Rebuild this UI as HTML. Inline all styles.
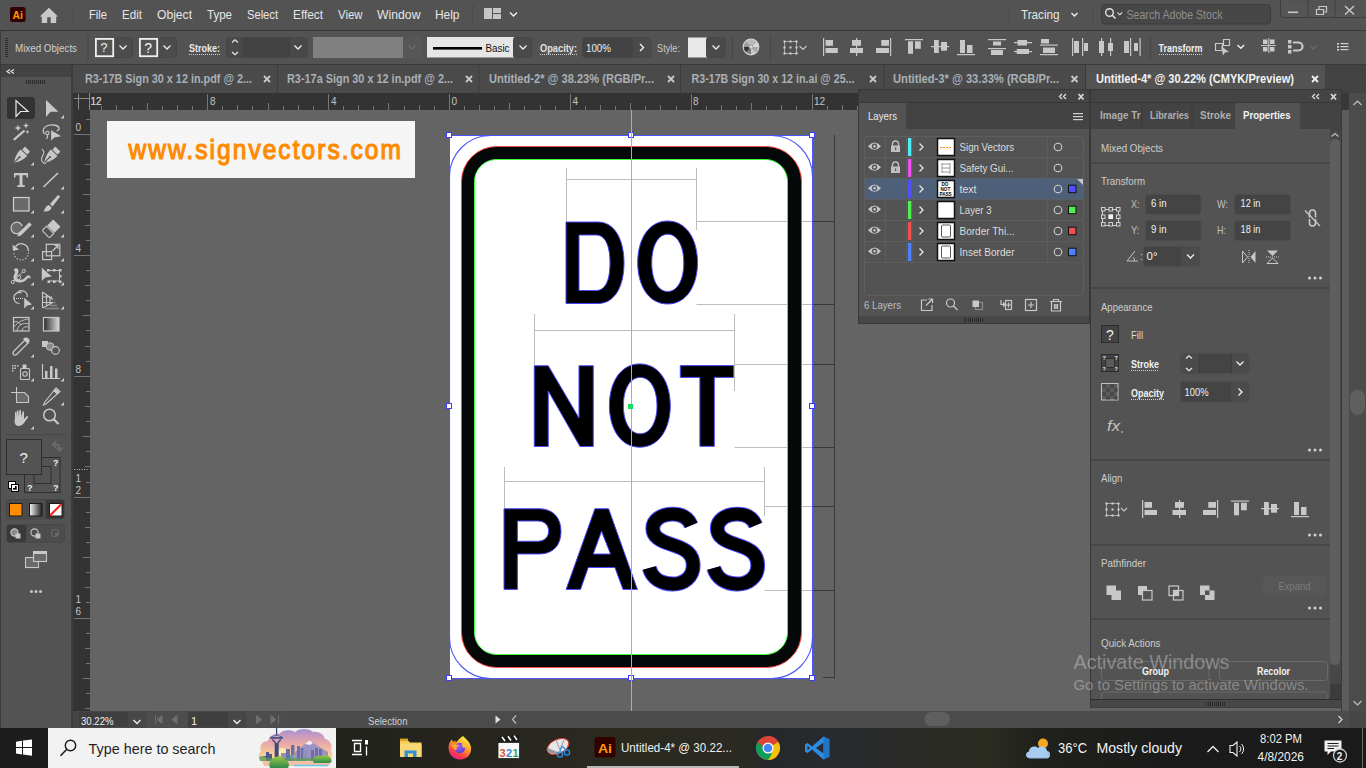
<!DOCTYPE html>
<html><head><meta charset="utf-8">
<style>
*{margin:0;padding:0;box-sizing:border-box}
html,body{width:1366px;height:768px;overflow:hidden;background:#535353;font-family:"Liberation Sans",sans-serif}
.a{position:absolute}
svg text{font-family:"Liberation Sans",sans-serif}
</style></head><body>
<div class="a" style="left:0;top:0;width:1366px;height:30px;background:#535353"></div>
<div class="a" style="left:0;top:30px;width:1366px;height:1px;background:#383838"></div>
<div class="a" style="left:0;top:31px;width:1366px;height:33px;background:#535353"></div>
<div class="a" style="left:0;top:64px;width:1366px;height:1px;background:#3a3a3a"></div>
<div class="a" style="left:0;top:65px;width:1366px;height:28px;background:#434343"></div>
<div class="a" style="left:0;top:65px;width:72px;height:663px;background:#3c3c3c"></div>
<div class="a" style="left:73px;top:93px;width:1276px;height:17px;background:#333"></div>
<div class="a" style="left:73px;top:93px;width:17px;height:618px;background:#333"></div>
<div class="a" style="left:90px;top:110px;width:1259px;height:601px;background:#646464"></div>
<div class="a" style="left:73px;top:711px;width:1293px;height:17px;background:#4a4a4a"></div>
<div class="a" style="left:0;top:728px;width:1366px;height:40px;background:#1d1d1a"></div>
<svg class="a" style="left:0;top:0" width="1366" height="768" viewBox="0 0 1366 768">
<defs><clipPath id="cv"><rect x="90" y="110" width="1259" height="601"/></clipPath></defs>
<g clip-path="url(#cv)">
<rect x="107" y="121" width="308" height="57" fill="#f5f5f5"/>
<text x="0" y="159" transform="translate(128.5 0) scale(0.875 1)" fill="#ff8a00" stroke="#ff8a00" stroke-width="1.2" font-family="Liberation Sans" font-size="28" letter-spacing="2.35">www.signvectors.com</text>
<rect x="449" y="135" width="364" height="544" fill="#fff"/>
<g stroke="#bdbdbd" stroke-width="1" fill="none">
<path d="M566.5,168V222M566.5,179.5H696.5M696.5,168V230M696.5,221.5H813M696.5,304.5H813"/>
<path d="M534.5,314V365M534.5,330.5H734.5M734.5,314V391M734.5,364.5H813M734.5,447.5H813"/>
<path d="M504.5,467V508M504.5,481.5H764.5M764.5,467V516M764.5,506.5H813M764.5,590.5H813"/>
</g>
<g stroke="#3a3a3a" stroke-width="1" fill="none">
<path d="M813,221.5H834.5M813,304.5H834.5M813,364.5H834.5M813,447.5H834.5M813,506.5H834.5M813,590.5H834.5M834.5,135V678.5M823,677.5H835"/>
</g>
<path fill-rule="evenodd" fill="#050808" d="M496.5,146.5H766.5A35,35 0 0 1 801.5,181.5V632.5A35,35 0 0 1 766.5,667.5H496.5A35,35 0 0 1 461.5,632.5V181.5A35,35 0 0 1 496.5,146.5Z M496.5,159.5A22,22 0 0 0 474.5,181.5V632.5A22,22 0 0 0 496.5,654.5H765.5A22,22 0 0 0 787.5,632.5V181.5A22,22 0 0 0 765.5,159.5Z"/>
<path fill="none" stroke="#ff4a4a" stroke-width="1" d="M496.5,146.5H766.5A35,35 0 0 1 801.5,181.5V632.5A35,35 0 0 1 766.5,667.5H496.5A35,35 0 0 1 461.5,632.5V181.5A35,35 0 0 1 496.5,146.5Z"/>
<path fill="none" stroke="#3cff3c" stroke-width="1" d="M496.5,159.5A22,22 0 0 0 474.5,181.5V632.5A22,22 0 0 0 496.5,654.5H765.5A22,22 0 0 0 787.5,632.5V181.5A22,22 0 0 0 765.5,159.5Z"/>
<path fill="none" stroke="#4a55ff" stroke-width="1.1" d="M490.5,135.5H771.5A41,41 0 0 1 812.5,176.5V637.5A41,41 0 0 1 771.5,678.5H490.5A41,41 0 0 1 449.5,637.5V176.5A41,41 0 0 1 490.5,135.5Z"/>
<g fill="#000" stroke="#4848ff" stroke-width="1" fill-rule="evenodd">
<path d="M566,222H598C615,222 624,240 624,263C624,286 615,303.5 598,303.5H566Z M579,235V290.5H596C605.5,290.5 610,280 610,263C610,246 605.5,235 596,235Z"/>
<path d="M667.6,221C687,221 697.5,240 697.5,262.5C697.5,285 687,304 667.6,304C648.2,304 637.7,285 637.7,262.5C637.7,240 648.2,221 667.6,221Z M667.7,234.2C658,234.2 651.7,246 651.7,262.9C651.7,279.8 658,291.5 667.7,291.5C677.4,291.5 683.8,279.8 683.8,262.9C683.8,246 677.4,234.2 667.7,234.2Z"/>
<path d="M534.25,365.75H548.25L579,418V365.75H593.25V446.5H580L548.25,391V446.5H534.25Z"/>
<path d="M639.85,363.9C659.6,363.9 670.3,383 670.3,405.55C670.3,428 659.6,447.2 639.85,447.2C620.1,447.2 609.4,428 609.4,405.55C609.4,383 620.1,363.9 639.85,363.9Z M640.2,377.4C630,377.4 623.4,389 623.4,405.6C623.4,422.2 630,433.8 640.2,433.8C650.4,433.8 657,422.2 657,405.6C657,389 650.4,377.4 640.2,377.4Z"/>
<path d="M680.3,365.6H733.5V377.4H714.3V446.3H699.9V377.4H680.3Z"/>
<path d="M504,508.75H539C553.5,508.75 561,518 561,531.4C561,545 553.5,554 539,554H517.4V589.4H504Z M517.4,521V541.25H537.5C545,541.25 548.6,536.5 548.6,531C548.6,525.5 545,521 537.5,521Z"/>
<path d="M594.9,508.75H608.6L637.4,589.4H623L614.9,567.5H588.25L580.5,589.4H566.1Z M601.5,531.25L593.25,554H610.5Z"/>
</g>
<g id="S1" fill="none" stroke-linecap="butt">
<path stroke="#4848ff" stroke-width="14.8" d="M691.3,525.3C688,517.5 681,514.2 673,514.2C661,514.2 652.8,520 652.8,528.5C652.8,537 660,541 673,545C686,549 693.2,554 693.2,565.5C693.2,577 684,584 673,584C661,584 652,578 649.3,568"/>
<path stroke="#000" stroke-width="12.8" d="M691.3,525.3C688,517.5 681,514.2 673,514.2C661,514.2 652.8,520 652.8,528.5C652.8,537 660,541 673,545C686,549 693.2,554 693.2,565.5C693.2,577 684,584 673,584C661,584 652,578 649.3,568"/>
</g>
<use href="#S1" x="64.5"/>
<path fill="none" stroke="#4a55ff" stroke-width="1" d="M449.5,135.5H812.5V678.5H449.5Z"/>
<g fill="#fff" stroke="#3c3cff" stroke-width="1">
<rect x="446.5" y="132.5" width="5" height="5"/><rect x="628.5" y="132.5" width="5" height="5"/><rect x="809.5" y="132.5" width="5" height="5"/>
<rect x="446.5" y="403.5" width="5" height="5"/><rect x="809.5" y="403.5" width="5" height="5"/>
<rect x="446.5" y="675.5" width="5" height="5"/><rect x="628.5" y="675.5" width="5" height="5"/><rect x="809.5" y="675.5" width="5" height="5"/>
</g>
<rect x="631" y="110" width="1" height="601" fill="#22e6f5"/>
<rect x="628" y="404" width="5" height="5" fill="#10e060"/>
</g>
</svg>

<svg class="a" style="left:0;top:0" width="1366" height="768" viewBox="0 0 1366 768">
<!-- menubar -->
<rect x="10" y="7" width="15.6" height="15" rx="2.5" fill="#330000"/>
<text x="12.6" y="18.6" font-size="10" font-weight="bold" fill="#ff9a00" textLength="10.4" lengthAdjust="spacingAndGlyphs">Ai</text>
<path d="M48.9,7.7L58,16.5H56.2V23H50.7V17.2H47.2V23H41.8V16.5H39.8Z" fill="#c8c8c8"/>
<rect x="73" y="5" width="1" height="20" fill="#4a4a4a"/>
<g font-size="13" fill="#e6e6e6">
<text x="89" y="18.5" textLength="18" lengthAdjust="spacingAndGlyphs">File</text>
<text x="122" y="18.5" textLength="20" lengthAdjust="spacingAndGlyphs">Edit</text>
<text x="157" y="18.5" textLength="35" lengthAdjust="spacingAndGlyphs">Object</text>
<text x="207" y="18.5" textLength="25" lengthAdjust="spacingAndGlyphs">Type</text>
<text x="247" y="18.5" textLength="31" lengthAdjust="spacingAndGlyphs">Select</text>
<text x="293" y="18.5" textLength="30" lengthAdjust="spacingAndGlyphs">Effect</text>
<text x="338" y="18.5" textLength="24.5" lengthAdjust="spacingAndGlyphs">View</text>
<text x="377" y="18.5" textLength="43.5" lengthAdjust="spacingAndGlyphs">Window</text>
<text x="435" y="18.5" textLength="24.5" lengthAdjust="spacingAndGlyphs">Help</text>
</g>
<rect x="472" y="5" width="1" height="20" fill="#4a4a4a"/>
<path d="M484,8H492V19H484ZM493,8H501V13H493ZM493,14H501V19H493Z" fill="#c6c6c6"/>
<path d="M510,12.5L513.5,16L517,12.5" stroke="#f0f0f0" stroke-width="1.4" fill="none"/>
<rect x="1009" y="5" width="1" height="20" fill="#4a4a4a"/>
<text x="1021" y="19" font-size="13" fill="#e6e6e6" textLength="38.5" lengthAdjust="spacingAndGlyphs">Tracing</text>
<path d="M1071.5,13L1074.5,16L1077.5,13" stroke="#f0f0f0" stroke-width="1.4" fill="none"/>
<rect x="1092" y="5" width="1" height="20" fill="#4a4a4a"/>
<rect x="1101.5" y="4.5" width="169" height="19.5" rx="3" fill="#474747" stroke="#3c3c3c"/>
<circle cx="1109.5" cy="12.5" r="3.8" stroke="#e0e0e0" stroke-width="1.4" fill="none"/>
<path d="M1112.3,15.3L1115.5,18.5" stroke="#e0e0e0" stroke-width="1.6"/>
<path d="M1117.5,12.5L1119.8,14.8L1122.1,12.5" stroke="#e0e0e0" stroke-width="1.1" fill="none"/>
<text x="1126.5" y="18.8" font-size="12.5" fill="#8e8e8e" textLength="96" lengthAdjust="spacingAndGlyphs">Search Adobe Stock</text>
<path d="M1280.5,0V14.5Q1280.5,17.5 1283.5,17.5H1366" fill="#565656" stroke="#3e3e3e"/>
<rect x="1307.5" y="0" width="1" height="17.5" fill="#3e3e3e"/>
<rect x="1334.5" y="0" width="1" height="17.5" fill="#3e3e3e"/>
<rect x="1288" y="11.5" width="10" height="1.6" fill="#c8c8c8"/>
<path d="M1316.5,9.5H1323.5V14.5H1316.5ZM1319,9.5V6.5H1326.5V12H1323.5" stroke="#c8c8c8" stroke-width="1.2" fill="none"/>
<path d="M1345,6L1354,14.5M1354,6L1345,14.5" stroke="#c8c8c8" stroke-width="1.5"/>

<!-- control bar -->
<rect x="0" y="31" width="1" height="33" fill="#3d3d3d"/>
<g fill="#2e2e2e"><rect x="5" y="38" width="3" height="1"/><rect x="5" y="40" width="3" height="1"/><rect x="5" y="42" width="3" height="1"/><rect x="5" y="44" width="3" height="1"/><rect x="5" y="46" width="3" height="1"/><rect x="5" y="48" width="3" height="1"/><rect x="5" y="50" width="3" height="1"/><rect x="5" y="52" width="3" height="1"/><rect x="5" y="54" width="3" height="1"/><rect x="5" y="56" width="3" height="1"/></g>
<text x="15" y="52" font-size="11" fill="#d0d0d0" textLength="62" lengthAdjust="spacingAndGlyphs">Mixed Objects</text>
<rect x="87.5" y="35" width="1" height="25" fill="#474747"/>
<!-- fill ? -->
<rect x="113.5" y="37.5" width="19" height="20" rx="3" fill="#4c4c4c" stroke="#474747"/>
<rect x="95.9" y="38.9" width="17.3" height="17.3" fill="#535353" stroke="#f0f0f0" stroke-width="1.8"/>
<text x="100.6" y="52.2" font-size="12.5" fill="#f4f4f4">?</text>
<path d="M119.5,45.5L123,49L126.5,45.5" stroke="#f0f0f0" stroke-width="1.3" fill="none"/>
<rect x="157.5" y="37.5" width="19" height="20" rx="3" fill="#4c4c4c" stroke="#474747"/>
<rect x="139.9" y="38.9" width="17.3" height="17.3" fill="#535353" stroke="#f0f0f0" stroke-width="1.8"/>
<text x="144.2" y="53" font-size="14" fill="#f4f4f4">?</text>
<path d="M163.5,45.5L167,49L170.5,45.5" stroke="#f0f0f0" stroke-width="1.3" fill="none"/>
<!-- Stroke: -->
<text x="189" y="52" font-size="11" font-weight="bold" fill="#e8e8e8" textLength="31" lengthAdjust="spacingAndGlyphs">Stroke:</text>
<path d="M189,54.5H220" stroke="#d0d0d0" stroke-width="1" stroke-dasharray="1 1"/>
<rect x="226.5" y="37.5" width="81" height="20" rx="3" fill="#494949" stroke="#474747"/>
<rect x="244" y="38" width="45" height="19" fill="#434343"/>
<rect x="243.5" y="38" width="1" height="19" fill="#3e3e3e"/><rect x="289" y="38" width="1" height="19" fill="#3e3e3e"/>
<path d="M232,42.5L235,39.8L238,42.5M232,52L235,54.7L238,52" stroke="#e6e6e6" stroke-width="1.3" fill="none"/>
<path d="M294.5,45.5L298,49L301.5,45.5" stroke="#f0f0f0" stroke-width="1.3" fill="none"/>
<rect x="313" y="37" width="90" height="21" fill="#808080"/>
<rect x="403" y="37" width="18.5" height="21" fill="#575757"/>
<path d="M408.5,45.5L412,49L415.5,45.5" stroke="#6e6e6e" stroke-width="1.3" fill="none"/>
<!-- Basic -->
<rect x="427" y="37" width="87" height="20.5" fill="#e6e6e6"/>
<rect x="433" y="47" width="49" height="2.6" fill="#000"/>
<text x="485.5" y="52" font-size="11" fill="#101010" textLength="24" lengthAdjust="spacingAndGlyphs">Basic</text>
<rect x="513.5" y="37.5" width="18.5" height="20" rx="2" fill="#4a4a4a" stroke="#474747"/>
<path d="M519.5,45.5L523,49L526.5,45.5" stroke="#f0f0f0" stroke-width="1.3" fill="none"/>
<text x="540" y="52" font-size="11" font-weight="bold" fill="#e0e0e0" textLength="37" lengthAdjust="spacingAndGlyphs">Opacity:</text>
<path d="M540,54.5H577" stroke="#d0d0d0" stroke-width="1" stroke-dasharray="1 1"/>
<rect x="582.5" y="37.5" width="68.5" height="20" rx="3" fill="#4b4b4b" stroke="#474747"/>
<rect x="583" y="38" width="50" height="19" fill="#434343"/>
<text x="586" y="51.5" font-size="11" fill="#f0f0f0" textLength="25" lengthAdjust="spacingAndGlyphs">100%</text>
<path d="M640,44L643.5,47.5L640,51" stroke="#f0f0f0" stroke-width="1.4" fill="none"/>
<text x="657" y="52" font-size="11" fill="#c8c8c8" textLength="23" lengthAdjust="spacingAndGlyphs">Style:</text>
<rect x="688" y="37.5" width="19" height="20" fill="#e8e8e8"/>
<rect x="706.5" y="37.5" width="18.5" height="20" rx="2" fill="#4a4a4a" stroke="#474747"/>
<path d="M712.5,45.5L716,49L719.5,45.5" stroke="#f0f0f0" stroke-width="1.3" fill="none"/>
<rect x="732" y="35" width="1" height="25" fill="#474747"/>
<!-- recolor globe -->
<path d="M751,47L751.00,39.50A7.5,7.5 0 0 1 756.30,41.70Z" fill="#b8b8b8"/><path d="M751,47L756.30,41.70A7.5,7.5 0 0 1 758.50,47.00Z" fill="#d8d8d8"/><path d="M751,47L758.50,47.00A7.5,7.5 0 0 1 756.30,52.30Z" fill="#a8a8a8"/><path d="M751,47L756.30,52.30A7.5,7.5 0 0 1 751.00,54.50Z" fill="#c8c8c8"/><path d="M751,47L751.00,54.50A7.5,7.5 0 0 1 745.70,52.30Z" fill="#7a7a7a"/><path d="M751,47L745.70,52.30A7.5,7.5 0 0 1 743.50,47.00Z" fill="#303030"/><path d="M751,47L743.50,47.00A7.5,7.5 0 0 1 745.70,41.70Z" fill="#9a9a9a"/><path d="M751,47L745.70,41.70A7.5,7.5 0 0 1 751.00,39.50Z" fill="#bcbcbc"/><circle cx="751" cy="47" r="7.8" fill="none" stroke="#d4d4d4" stroke-width="1.2"/><circle cx="751" cy="47" r="2" fill="#d8d8d8" stroke="#8a8a8a" stroke-width="0.6"/>
<rect x="770" y="35" width="1" height="25" fill="#474747"/>
<!-- align to selection -->
<path d="M785,41.5H796M785,53.5H796M784.5,42V53M796.5,42V53" stroke="#bdbdbd" stroke-width="0.8"/><g fill="#d8d8d8"><rect x="783.5" y="40.5" width="2" height="2"/><rect x="789.5" y="40.5" width="2" height="2"/><rect x="795.5" y="40.5" width="2" height="2"/><rect x="783.5" y="46.5" width="2" height="2"/><rect x="795.5" y="46.5" width="2" height="2"/><rect x="783.5" y="52.5" width="2" height="2"/><rect x="789.5" y="52.5" width="2" height="2"/><rect x="795.5" y="52.5" width="2" height="2"/><rect x="789.5" y="46.5" width="2" height="2"/></g><path d="M799.5,46L803,49.5L806.5,46" stroke="#c8c8c8" stroke-width="1.1" fill="none"/>
<g fill="#c8c8c8">
<!-- align left -->
<rect x="823" y="38" width="1.2" height="18"/><rect x="825.5" y="40" width="7.5" height="5.8"/><rect x="825.5" y="48" width="12.3" height="5"/>
<!-- align hcenter -->
<rect x="856" y="38" width="1.2" height="18"/><rect x="852" y="40" width="9" height="5.8"/><rect x="850" y="48" width="13" height="5"/>
<!-- align right -->
<rect x="890" y="38" width="1.2" height="18"/><rect x="881.3" y="40" width="7.7" height="5.8"/><rect x="876" y="48" width="13" height="5"/>
<!-- align top -->
<rect x="905" y="39" width="18" height="1.2"/><rect x="908" y="41.3" width="5" height="12.5"/><rect x="915" y="41.3" width="5.8" height="7.5"/>
<!-- align vcenter -->
<rect x="931" y="46" width="18" height="1.2"/><rect x="934" y="40" width="4.8" height="13"/><rect x="941" y="42" width="6" height="8.7"/>
<!-- align bottom -->
<rect x="957" y="54" width="18" height="1.2"/><rect x="960" y="40" width="5" height="13"/><rect x="967" y="45" width="5.5" height="8"/>
<!-- dist top -->
<rect x="988" y="39" width="18" height="1.2"/><rect x="993" y="41.5" width="8" height="4"/><rect x="988" y="48" width="18" height="1.2"/><rect x="991" y="50" width="12" height="5"/>
<!-- dist vcenter -->
<rect x="1014" y="42" width="18" height="1.2"/><rect x="1017.5" y="40" width="9.5" height="5.5"/><rect x="1014" y="51" width="18" height="1.2"/><rect x="1016.7" y="49" width="12.3" height="5"/>
<!-- dist bottom -->
<rect x="1041" y="39" width="8" height="4.5"/><rect x="1040" y="44.5" width="18" height="1.2"/><rect x="1043" y="47.5" width="12" height="5.5"/><rect x="1040" y="54" width="18" height="1.2"/>
<!-- dist left -->
<rect x="1072" y="38" width="1.2" height="18"/><rect x="1074" y="41" width="5" height="12"/><rect x="1082" y="38" width="1.2" height="18"/><rect x="1084" y="43" width="4" height="8"/>
<!-- dist hcenter -->
<rect x="1099" y="41" width="5" height="12"/><rect x="1101" y="38" width="1.2" height="18"/><rect x="1108" y="43" width="5" height="8"/><rect x="1110" y="38" width="1.2" height="18"/>
<!-- dist right -->
<rect x="1124" y="41" width="5" height="12"/><rect x="1130" y="38" width="1.2" height="18"/><rect x="1134" y="43" width="4" height="8"/><rect x="1139.5" y="38" width="1.2" height="18"/>
</g>
<rect x="1150" y="35" width="1" height="25" fill="#474747"/>
<text x="1158.5" y="52" font-size="11" font-weight="bold" fill="#f0f0f0" textLength="44" lengthAdjust="spacingAndGlyphs">Transform</text>
<path d="M1159,54.5H1202" stroke="#d0d0d0" stroke-width="1" stroke-dasharray="1 1"/>
<!-- transform selection icon -->
<path d="M1215.5,43.5H1222.5V50.5H1215.5ZM1223.5,39.5H1229.5V45.5H1223.5Z" stroke="#c8c8c8" stroke-width="1.2" fill="none"/>
<path d="M1221,46L1229,52L1225,52.5L1223,55.5Z" fill="#c8c8c8"/>
<path d="M1237.5,45L1240.8,48.3L1244.1,45" stroke="#f0f0f0" stroke-width="1.4" fill="none"/>
<g fill="#c8c8c8"><rect x="1263" y="39.5" width="4.5" height="4.5"/><rect x="1270" y="39.5" width="4.5" height="4.5"/><rect x="1263" y="47" width="4.5" height="4.5"/><rect x="1270" y="47" width="4.5" height="4.5"/><rect x="1261" y="45" width="15" height="1"/><rect x="1268.3" y="38" width="1" height="15"/></g>
<g fill="#c8c8c8"><rect x="1288" y="40" width="3.5" height="3.5"/><rect x="1288" y="45" width="3.5" height="3.5"/><rect x="1288" y="50" width="3.5" height="3.5"/></g>
<path d="M1293,42.5H1298.5A4,4 0 0 1 1298.5,50.5H1293" stroke="#c8c8c8" stroke-width="2.2" fill="none"/>
<path d="M1310,45.5L1313.5,49L1317,45.5" stroke="#6a6a6a" stroke-width="1.3" fill="none"/>
<g fill="#d0d0d0"><rect x="1337" y="43" width="2" height="1.6"/><rect x="1340.5" y="43" width="8" height="1.2"/><rect x="1337" y="46" width="2" height="1.6"/><rect x="1340.5" y="46" width="8" height="1.2"/><rect x="1337" y="49" width="2" height="1.6"/><rect x="1340.5" y="49" width="8" height="1.2"/></g>

<!-- tabs -->
<rect x="73" y="65" width="205" height="28" fill="#4a4a4a"/>
<rect x="277" y="65" width="1" height="28" fill="#3c3c3c"/>
<text x="85" y="83.2" font-size="12" font-weight="bold" fill="#a9b0b6" textLength="167" lengthAdjust="spacingAndGlyphs">R3-17B Sign 30 x 12 in.pdf @ 2...</text>
<path d="M264,76L270,82M270,76L264,82" stroke="#c8c8c8" stroke-width="1.8"/>
<rect x="278" y="65" width="201.5" height="28" fill="#4a4a4a"/>
<rect x="478.5" y="65" width="1" height="28" fill="#3c3c3c"/>
<text x="287" y="83.2" font-size="12" font-weight="bold" fill="#a9b0b6" textLength="166" lengthAdjust="spacingAndGlyphs">R3-17a Sign 30 x 12 in.pdf @ 2...</text>
<path d="M466,76L472,82M472,76L466,82" stroke="#c8c8c8" stroke-width="1.8"/>
<rect x="479.5" y="65" width="201.5" height="28" fill="#4a4a4a"/>
<rect x="680" y="65" width="1" height="28" fill="#3c3c3c"/>
<text x="489" y="83.2" font-size="12" font-weight="bold" fill="#a9b0b6" textLength="165" lengthAdjust="spacingAndGlyphs">Untitled-2* @ 38.23% (RGB/Pr...</text>
<path d="M668,76L674,82M674,76L668,82" stroke="#c8c8c8" stroke-width="1.8"/>
<rect x="681" y="65" width="203.5" height="28" fill="#4a4a4a"/>
<rect x="883.5" y="65" width="1" height="28" fill="#3c3c3c"/>
<text x="691.5" y="83.2" font-size="12" font-weight="bold" fill="#a9b0b6" textLength="163.0" lengthAdjust="spacingAndGlyphs">R3-17B Sign 30 x 12 in.ai @ 25...</text>
<path d="M870,76L876,82M876,76L870,82" stroke="#c8c8c8" stroke-width="1.8"/>
<rect x="884.5" y="65" width="201.5" height="28" fill="#4a4a4a"/>
<rect x="1085" y="65" width="1" height="28" fill="#3c3c3c"/>
<text x="893" y="83.2" font-size="12" font-weight="bold" fill="#a9b0b6" textLength="166" lengthAdjust="spacingAndGlyphs">Untitled-3* @ 33.33% (RGB/Pr...</text>
<path d="M1071.5,76L1077.5,82M1077.5,76L1071.5,82" stroke="#c8c8c8" stroke-width="1.8"/>
<rect x="1086" y="65" width="239" height="28" fill="#535353"/>
<text x="1096" y="83.2" font-size="12" font-weight="bold" fill="#f2f2f2" textLength="198" lengthAdjust="spacingAndGlyphs">Untitled-4* @ 30.22% (CMYK/Preview)</text>
<path d="M1312,76L1318,82M1318,76L1312,82" stroke="#f0f0f0" stroke-width="1.8"/>
<!-- rulers -->
<g fill="#767676">
<rect x="101" y="106" width="1" height="4"/>
<rect x="116" y="105" width="1" height="5"/>
<rect x="132" y="106" width="1" height="4"/>
<rect x="147" y="103" width="1" height="7"/>
<rect x="162" y="106" width="1" height="4"/>
<rect x="177" y="105" width="1" height="5"/>
<rect x="192" y="106" width="1" height="4"/>
<rect x="207" y="94" width="1" height="16"/>
<rect x="222" y="106" width="1" height="4"/>
<rect x="237" y="105" width="1" height="5"/>
<rect x="252" y="106" width="1" height="4"/>
<rect x="268" y="103" width="1" height="7"/>
<rect x="283" y="106" width="1" height="4"/>
<rect x="298" y="105" width="1" height="5"/>
<rect x="313" y="106" width="1" height="4"/>
<rect x="328" y="94" width="1" height="16"/>
<rect x="343" y="106" width="1" height="4"/>
<rect x="358" y="105" width="1" height="5"/>
<rect x="373" y="106" width="1" height="4"/>
<rect x="388" y="103" width="1" height="7"/>
<rect x="404" y="106" width="1" height="4"/>
<rect x="419" y="105" width="1" height="5"/>
<rect x="434" y="106" width="1" height="4"/>
<rect x="449" y="94" width="1" height="16"/>
<rect x="464" y="106" width="1" height="4"/>
<rect x="479" y="105" width="1" height="5"/>
<rect x="494" y="106" width="1" height="4"/>
<rect x="509" y="103" width="1" height="7"/>
<rect x="524" y="106" width="1" height="4"/>
<rect x="540" y="105" width="1" height="5"/>
<rect x="555" y="106" width="1" height="4"/>
<rect x="570" y="94" width="1" height="16"/>
<rect x="585" y="106" width="1" height="4"/>
<rect x="600" y="105" width="1" height="5"/>
<rect x="615" y="106" width="1" height="4"/>
<rect x="630" y="103" width="1" height="7"/>
<rect x="645" y="106" width="1" height="4"/>
<rect x="660" y="105" width="1" height="5"/>
<rect x="676" y="106" width="1" height="4"/>
<rect x="691" y="94" width="1" height="16"/>
<rect x="706" y="106" width="1" height="4"/>
<rect x="721" y="105" width="1" height="5"/>
<rect x="736" y="106" width="1" height="4"/>
<rect x="751" y="103" width="1" height="7"/>
<rect x="766" y="106" width="1" height="4"/>
<rect x="781" y="105" width="1" height="5"/>
<rect x="796" y="106" width="1" height="4"/>
<rect x="812" y="94" width="1" height="16"/>
<rect x="827" y="106" width="1" height="4"/>
<rect x="842" y="105" width="1" height="5"/>
<rect x="857" y="106" width="1" height="4"/>
<rect x="872" y="103" width="1" height="7"/>
<rect x="887" y="106" width="1" height="4"/>
<rect x="902" y="105" width="1" height="5"/>
<rect x="917" y="106" width="1" height="4"/>
<rect x="932" y="94" width="1" height="16"/>
<rect x="948" y="106" width="1" height="4"/>
<rect x="963" y="105" width="1" height="5"/>
<rect x="978" y="106" width="1" height="4"/>
<rect x="993" y="103" width="1" height="7"/>
<rect x="1008" y="106" width="1" height="4"/>
<rect x="1023" y="105" width="1" height="5"/>
<rect x="1038" y="106" width="1" height="4"/>
<rect x="1053" y="94" width="1" height="16"/>
<rect x="1069" y="106" width="1" height="4"/>
<rect x="1084" y="105" width="1" height="5"/>
<rect x="1099" y="106" width="1" height="4"/>
<rect x="1114" y="103" width="1" height="7"/>
<rect x="1129" y="106" width="1" height="4"/>
<rect x="1144" y="105" width="1" height="5"/>
<rect x="1159" y="106" width="1" height="4"/>
<rect x="1174" y="94" width="1" height="16"/>
<rect x="1189" y="106" width="1" height="4"/>
<rect x="1205" y="105" width="1" height="5"/>
<rect x="1220" y="106" width="1" height="4"/>
<rect x="1235" y="103" width="1" height="7"/>
<rect x="1250" y="106" width="1" height="4"/>
<rect x="1265" y="105" width="1" height="5"/>
<rect x="1280" y="106" width="1" height="4"/>
<rect x="1295" y="94" width="1" height="16"/>
<rect x="1310" y="106" width="1" height="4"/>
<rect x="1325" y="105" width="1" height="5"/>
<rect x="1341" y="106" width="1" height="4"/>
<rect x="86" y="119" width="4" height="1"/>
<rect x="74" y="134" width="16" height="1"/>
<rect x="86" y="149" width="4" height="1"/>
<rect x="85" y="164" width="5" height="1"/>
<rect x="86" y="179" width="4" height="1"/>
<rect x="83" y="194" width="7" height="1"/>
<rect x="86" y="210" width="4" height="1"/>
<rect x="85" y="225" width="5" height="1"/>
<rect x="86" y="240" width="4" height="1"/>
<rect x="74" y="255" width="16" height="1"/>
<rect x="86" y="270" width="4" height="1"/>
<rect x="85" y="285" width="5" height="1"/>
<rect x="86" y="300" width="4" height="1"/>
<rect x="83" y="315" width="7" height="1"/>
<rect x="86" y="330" width="4" height="1"/>
<rect x="85" y="346" width="5" height="1"/>
<rect x="86" y="361" width="4" height="1"/>
<rect x="74" y="376" width="16" height="1"/>
<rect x="86" y="391" width="4" height="1"/>
<rect x="85" y="406" width="5" height="1"/>
<rect x="86" y="421" width="4" height="1"/>
<rect x="83" y="436" width="7" height="1"/>
<rect x="86" y="451" width="4" height="1"/>
<rect x="85" y="466" width="5" height="1"/>
<rect x="86" y="482" width="4" height="1"/>
<rect x="74" y="497" width="16" height="1"/>
<rect x="86" y="512" width="4" height="1"/>
<rect x="85" y="527" width="5" height="1"/>
<rect x="86" y="542" width="4" height="1"/>
<rect x="83" y="557" width="7" height="1"/>
<rect x="86" y="572" width="4" height="1"/>
<rect x="85" y="587" width="5" height="1"/>
<rect x="86" y="602" width="4" height="1"/>
<rect x="74" y="618" width="16" height="1"/>
<rect x="86" y="633" width="4" height="1"/>
<rect x="85" y="648" width="5" height="1"/>
<rect x="86" y="663" width="4" height="1"/>
<rect x="83" y="678" width="7" height="1"/>
<rect x="86" y="693" width="4" height="1"/>
<rect x="85" y="708" width="5" height="1"/>
</g>
<g font-size="10" fill="#c4c4c4">
<text x="90.5" y="105">12</text>
<text x="210" y="105">8</text>
<text x="331" y="105">4</text>
<text x="451.5" y="105">0</text>
<text x="572.5" y="105">4</text>
<text x="693" y="105">8</text>
<text x="814" y="105">12</text>
<text x="935" y="105">16</text>
<text x="75.5" y="131.0">0</text>
<text x="75.5" y="251.9">4</text>
<text x="75.5" y="372.8">8</text>
<text x="75.5" y="482">1</text><text x="75.5" y="494">2</text>
<text x="75.5" y="603">1</text><text x="75.5" y="615">6</text>
</g>
<rect x="73" y="93" width="17" height="17" fill="#333"/>
<path d="M74,98.5H89.5M78.5,94V109.5" stroke="#8a8a8a" stroke-width="1"/>
<rect x="89" y="93" width="1" height="17" fill="#8a8a8a"/>
<text x="90.5" y="105" font-size="10" fill="#c4c4c4">12</text>
<path d="M74,469.5H89" stroke="#c0c0c0" stroke-width="1" stroke-dasharray="1 1.5"/>
<!-- toolbar -->
<rect x="1" y="65" width="71" height="12" fill="#434343"/>
<rect x="1" y="77" width="71" height="651" fill="#535353"/>
<rect x="71" y="65" width="2" height="663" fill="#3d3d3d"/>
<path d="M10,69.5L7,71.5L10,73.5M14,69.5L11,71.5L14,73.5" stroke="#e0e0e0" stroke-width="1.3" fill="none"/>
<g fill="#2a2a2a"><rect x="26" y="80" width="1" height="4"/><rect x="28" y="80" width="1" height="4"/><rect x="30" y="80" width="1" height="4"/><rect x="32" y="80" width="1" height="4"/><rect x="34" y="80" width="1" height="4"/><rect x="36" y="80" width="1" height="4"/><rect x="38" y="80" width="1" height="4"/><rect x="40" y="80" width="1" height="4"/><rect x="42" y="80" width="1" height="4"/><rect x="44" y="80" width="1" height="4"/></g>
<rect x="7" y="97" width="28" height="22" rx="3" fill="#333"/>
<path d="M16,100.5V116.5L20.5,111.5H28Z" stroke="#e8e8e8" stroke-width="1.2" fill="none" stroke-linejoin="miter"/>
<path d="M46,100V117L50.5,111.8H58.5Z" fill="#c8c8c8"/>
<g fill="#c8c8c8">
<!-- small corner triangles -->
<path d="M64,115V118.5H60.5Z"/>
<path d="M34,162V165.5H30.5Z"/><path d="M34,186V189.5H30.5Z"/><path d="M64,186V189.5H60.5Z"/>
<path d="M34,210V213.5H30.5Z"/><path d="M64,210V213.5H60.5Z"/>
<path d="M34,234V237.5H30.5Z"/><path d="M64,234V237.5H60.5Z"/>
<path d="M34,258V261.5H30.5Z"/><path d="M64,258V261.5H60.5Z"/>
<path d="M34,282V285.5H30.5Z"/><path d="M64,282V285.5H60.5Z"/>
<path d="M34,306V309.5H30.5Z"/><path d="M64,306V309.5H60.5Z"/>
<path d="M34,354V357.5H30.5Z"/>
<path d="M34,378V381.5H30.5Z"/><path d="M64,378V381.5H60.5Z"/>
<path d="M64,402V405.5H60.5Z"/>
<path d="M34,426V429.5H30.5Z"/>
</g>
<!-- magic wand -->
<path d="M13.8,139.8L24.5,130.5" stroke="#c8c8c8" stroke-width="2.2"/>
<path d="M18,124.5L18.9,127L21.5,128L18.9,129L18,131.5L17.1,129L14.5,128L17.1,127Z M26,122.5L26.8,124.8L29,125.6L26.8,126.4L26,128.7L25.2,126.4L23,125.6L25.2,124.8Z M27.4,129.8L28,131.3L29.5,131.9L28,132.5L27.4,134L26.8,132.5L25.3,131.9L26.8,131.3Z" fill="#c8c8c8"/>
<!-- lasso -->
<path d="M44.5,134C42,131.5 43,127 48,125.5C53,124 58.5,125.5 59,128C59.3,129.5 58,130.5 56.5,131" stroke="#c8c8c8" stroke-width="1.3" fill="none"/>
<circle cx="47.4" cy="133" r="1.7" fill="none" stroke="#c8c8c8" stroke-width="1.1"/>
<path d="M47.2,134.8C48,136 47.5,137.5 46.5,138.8" stroke="#c8c8c8" stroke-width="1.1" fill="none"/>
<path d="M51.1,130.3V140.8L54.3,137.5L61.2,136.3Z" fill="#c8c8c8"/>
<!-- pen -->
<g transform="translate(20.5 156.2) rotate(45)"><rect x="-3.6" y="-10" width="7.2" height="4.2" rx="0.6" fill="#c8c8c8"/><path d="M-4.6,-4.8H4.6C4.8,0 3.5,3.5 0,9.8C-3.5,3.5 -4.8,0 -4.6,-4.8Z" fill="#c8c8c8"/><path d="M0,9.5V1.5" stroke="#535353" stroke-width="1.1"/><circle cx="0" cy="1.2" r="1.1" fill="#535353"/></g>
<!-- curvature -->
<g transform="translate(50.8 156.2) rotate(45)"><rect x="-3.6" y="-10" width="7.2" height="4.2" rx="0.6" fill="#c8c8c8"/><path d="M-4.6,-4.8H4.6C4.8,0 3.5,3.5 0,9.8C-3.5,3.5 -4.8,0 -4.6,-4.8Z" fill="#c8c8c8"/><path d="M0,9.5V1.5" stroke="#535353" stroke-width="1.1"/><circle cx="0" cy="1.2" r="1.1" fill="#535353"/></g>
<path d="M41.8,149.3C44,150.5 44.5,152.5 43,155C41.5,157.5 41,160 42.5,162C43.5,163.3 45,163.5 46,163" stroke="#c8c8c8" stroke-width="1.1" fill="none"/>
<!-- type -->
<path d="M14,173H28V177.5H26.5V175.2H22.5V185.3H24.8V187H17.2V185.3H19.5V175.2H15.5V177.5H14Z" fill="#c8c8c8"/>
<!-- line -->
<path d="M43.5,187L58,173" stroke="#c8c8c8" stroke-width="1.6"/>
<!-- rectangle -->
<rect x="13.5" y="197.5" width="15.5" height="13.5" fill="#6a6a6a" stroke="#d0d0d0" stroke-width="1.2"/>
<!-- paintbrush -->
<path d="M57.5,195.5C59,194.5 60.5,196 59.5,197.5L52.5,206.5L50,204Z" fill="#c8c8c8"/>
<path d="M49,205L51.5,207.5C51,210.5 47.5,212 43.5,211.5C45,209.5 45,206 49,205Z" fill="#c8c8c8"/>
<!-- shaper -->
<path d="M20.5,232.5A5.8,5.8 0 1 1 22.3,226" fill="#6a6a6a" stroke="#c8c8c8" stroke-width="1.2"/>
<path d="M29.2,222.2L31.8,224.8L21,235.6L17.6,236.4L18.4,233Z" fill="#c8c8c8"/>
<!-- eraser -->
<path d="M53.2,219.5L60.5,226.8L54.5,232.8L47.2,225.5Z" fill="#c8c8c8"/>
<path d="M46.5,226.2L53.8,233.5L50.5,236.8C49.8,237.5 49,237.5 48.3,236.8L43.2,231.7C42.5,231 42.5,230.2 43.2,229.5Z" fill="none" stroke="#c8c8c8" stroke-width="1.1"/>
<!-- rotate -->
<path d="M15.5,246.5A7.2,7.2 0 0 1 28.4,251" stroke="#c8c8c8" stroke-width="1.4" fill="none"/>
<path d="M28.4,252.5A7.2,7.2 0 0 1 14,253" stroke="#c8c8c8" stroke-width="1.2" fill="none" stroke-dasharray="1.2 1.8"/>
<path d="M12.5,244.5L13,251L19,249.5Z" fill="#c8c8c8"/>
<!-- scale -->
<rect x="42.6" y="251.6" width="9" height="8" fill="none" stroke="#c8c8c8" stroke-width="1.2"/>
<rect x="46.3" y="244.3" width="13.5" height="11.5" fill="none" stroke="#c8c8c8" stroke-width="1.2"/>
<path d="M52.5,251L57.5,246M54.5,245.5H58V249" stroke="#c8c8c8" stroke-width="1.2" fill="none"/>
<!-- puppet warp -->
<path d="M13.5,270C15,267.5 18,268 18.5,270.5C19,273 16.5,274.5 17,277C17.5,279.5 21,280.5 23.5,279C26,277.5 26.5,275 28.5,275.2C30.5,275.5 31,277.5 30,279C29.5,277.5 28.5,277.3 27.5,278.5C25.5,281.5 22,283 18.5,282.5C14,281.8 12.5,278 14,275C15,273 16,271.5 13.5,270Z" fill="#c8c8c8"/>
<circle cx="18.5" cy="277.3" r="2.2" fill="#535353" stroke="#c8c8c8" stroke-width="1"/>
<path d="M13,282L23.6,271" stroke="#c8c8c8" stroke-width="1"/>
<circle cx="12.8" cy="282" r="1.6" fill="#535353" stroke="#c8c8c8" stroke-width="1"/>
<circle cx="23.8" cy="271" r="1.6" fill="#535353" stroke="#c8c8c8" stroke-width="1"/>
<!-- free transform -->
<path d="M41.8,267.8V281L45.3,277.6L51.8,276.6Z" fill="#c8c8c8"/>
<path d="M48.5,270.5H59.5V281H49" fill="none" stroke="#c8c8c8" stroke-width="1"/>
<g fill="#c8c8c8"><rect x="47" y="269" width="2.5" height="2.5"/><rect x="53" y="269" width="2.5" height="2.5"/><rect x="59" y="269" width="2.5" height="2.5"/><rect x="59" y="275" width="2.5" height="2.5"/><rect x="59" y="280.5" width="2.5" height="2.5"/><rect x="53" y="280.5" width="2.5" height="2.5"/><rect x="47.5" y="280.5" width="2.5" height="2.5"/></g>
<!-- shape builder -->
<path d="M19.5,303.5A5.5,5.5 0 1 1 21.5,293" stroke="#c8c8c8" stroke-width="1.2" fill="none"/>
<path d="M17.5,292.8A5.5,5.5 0 0 1 27.2,297" stroke="#c8c8c8" stroke-width="1.2" fill="none"/>
<path d="M14,298.5H23" stroke="#d8d8d8" stroke-width="1.1" stroke-dasharray="1 1"/>
<path d="M24.2,297.8V308.5L27.2,305.5L32,304.5Z" fill="#c8c8c8"/>
<!-- perspective grid -->
<path d="M42.5,292V308M42.5,292L53,299.5M42.5,308L53,302.5M46.5,295V306M50,297.5V304M42.5,297H52M42.5,302.5H53" stroke="#c8c8c8" stroke-width="1.1" fill="none"/>
<path d="M45,308.5H59M50,305.5H57M53.5,302.5H55.5" stroke="#8a8a8a" stroke-width="1.4"/>
<!-- mesh -->
<rect x="13.5" y="317.5" width="15.5" height="13.5" fill="none" stroke="#c8c8c8" stroke-width="1.2"/>
<path d="M14,327C18,322 22,320 28.5,319M17,331C18,325 23,322 28.5,324M22,331C22,328 25,326 28.5,327M14,322C17,321 19,322 21,325" stroke="#c8c8c8" stroke-width="0.9" fill="none"/>
<!-- gradient -->
<defs><linearGradient id="gr1" x1="0" x2="1" y1="0" y2="0"><stop offset="0" stop-color="#2a2a2a"/><stop offset="1" stop-color="#dcdcdc"/></linearGradient></defs>
<rect x="43.5" y="317.5" width="15.5" height="13.5" fill="url(#gr1)" stroke="#c8c8c8" stroke-width="1.2"/>
<!-- eyedropper -->
<path d="M25,340L28,343L26.5,344.5L17,354C15.5,355.5 14,355.5 13.5,354.5C12.5,353.5 13,352 14,351L23.5,341.5Z" fill="none" stroke="#c8c8c8" stroke-width="1.2"/>
<path d="M23,339C25,337 27,337 28.5,338.5C30,340 30,342 28,344Z" fill="#c8c8c8"/>
<!-- blend -->
<rect x="42" y="341" width="6" height="6" fill="#c8c8c8"/>
<circle cx="50" cy="346.5" r="3.8" fill="#8a8a8a" stroke="#c8c8c8" stroke-width="1"/>
<circle cx="55.5" cy="350.5" r="3.8" fill="#535353" stroke="#c8c8c8" stroke-width="1.2"/>
<!-- symbol sprayer -->
<g fill="#c8c8c8"><rect x="12" y="365" width="1.5" height="1.5"/><rect x="14.5" y="365" width="1.5" height="1.5"/><rect x="17" y="365" width="1.5" height="1.5"/><rect x="12" y="367.5" width="1.5" height="1.5"/><rect x="14.5" y="367.5" width="1.5" height="1.5"/><rect x="12" y="370" width="1.5" height="1.5"/></g>
<rect x="20.5" y="368.5" width="9" height="11" rx="1" fill="none" stroke="#c8c8c8" stroke-width="1.1"/>
<rect x="22.5" y="364.5" width="4" height="3.5" fill="#c8c8c8"/>
<circle cx="25" cy="374" r="2.2" fill="none" stroke="#c8c8c8" stroke-width="1.1"/>
<!-- column graph -->
<path d="M42.5,364V378.5H60" stroke="#c8c8c8" stroke-width="1.1" fill="none"/>
<g fill="#c8c8c8"><rect x="45" y="371" width="2.5" height="7"/><rect x="50" y="366" width="2.5" height="12"/><rect x="55" y="368.5" width="2.5" height="9.5"/></g>
<!-- artboard -->
<path d="M11,392.5H19M16.5,387V395" stroke="#c8c8c8" stroke-width="1.1"/>
<path d="M16.5,392.5H24.5L28.5,396.5V402.5H16.5Z" fill="#6a6a6a" stroke="#c8c8c8" stroke-width="1.1"/>
<!-- slice -->
<path d="M56,388L60,391.5L46,404L43.5,405L44.5,402.5Z" fill="none" stroke="#c8c8c8" stroke-width="1.1"/>
<path d="M55.5,388.5L59.5,392L57.5,394.5L53,391Z" fill="#c8c8c8"/>
<!-- hand -->
<path d="M15,418V412.5C15,411.5 16.5,411.5 16.5,412.5V417L17,411C17,410 18.5,410 18.5,411V416.5L19.5,410.5C19.5,409.5 21,409.5 21,410.5V417L22.5,412C22.5,411 24,411 24,412V419L26.5,416.5C27.5,415.5 28.5,416.5 28,417.5L24,423C22.5,425 21,426 18.5,426C15.5,426 14.5,423 14.5,421Z" fill="#c8c8c8"/>
<!-- zoom -->
<circle cx="49.5" cy="415" r="5.8" fill="none" stroke="#c8c8c8" stroke-width="1.5"/>
<path d="M53.5,419L58.5,424" stroke="#c8c8c8" stroke-width="2.2"/>
<!-- separator -->
<rect x="6" y="434" width="60" height="1" fill="#474747"/>
<!-- fill/stroke -->
<path d="M56,441.5L52.5,444.5L56,447.5M52.5,444.5H57C59,444.5 59.5,445.5 59.5,447.5V450M56.5,447.5L59.5,451L62.5,447.5" stroke="#6e6e6e" stroke-width="1.3" fill="none"/>
<rect x="24.5" y="457.5" width="35.5" height="35" fill="#535353" stroke="#2e2e2e" stroke-width="1"/>
<rect x="34" y="466.5" width="17" height="17" fill="#535353" stroke="#2e2e2e" stroke-width="1"/>
<rect x="6.5" y="439.5" width="35" height="35" fill="#535353" stroke="#2e2e2e" stroke-width="1"/>
<text x="19.5" y="463" font-size="15" fill="#f0f0f0">?</text>
<g font-size="9" font-weight="bold" fill="#f0f0f0"><text x="53" y="466">?</text><text x="27" y="491">?</text><text x="53" y="491">?</text></g>
<rect x="8.5" y="481.5" width="7" height="7" fill="#fff" stroke="#000" stroke-width="1"/>
<rect x="11.5" y="484.5" width="7" height="7" fill="none" stroke="#000" stroke-width="1"/>
<path d="M12.5,485.5H17.5V490.5H12.5Z" stroke="#fff" stroke-width="1" fill="none"/>
<!-- color buttons -->
<rect x="6.5" y="499.5" width="58" height="19.5" rx="3" fill="#4d4d4d" stroke="#474747"/>
<rect x="45" y="500" width="19" height="18.5" rx="2" fill="#383838"/>
<rect x="26" y="500" width="1" height="19" fill="#474747"/><rect x="45" y="500" width="1" height="19" fill="#474747"/>
<rect x="9.5" y="503.5" width="12.5" height="12.5" fill="#ff8c00" stroke="#1a1a1a" stroke-width="1"/>
<defs><linearGradient id="gr2" x1="0" x2="1"><stop offset="0" stop-color="#f8f8f8"/><stop offset="1" stop-color="#202020"/></linearGradient></defs>
<rect x="29.5" y="503.5" width="12.5" height="12.5" fill="url(#gr2)" stroke="#1a1a1a" stroke-width="1"/>
<rect x="49.5" y="503.5" width="12.5" height="12.5" fill="#fff" stroke="#1a1a1a" stroke-width="1"/>
<path d="M50,515.5L61.5,504" stroke="#ff1a1a" stroke-width="2"/>
<!-- draw modes -->
<rect x="6.5" y="524.5" width="58" height="18" rx="3" fill="#4d4d4d" stroke="#474747"/>
<rect x="7" y="525" width="19" height="17" rx="2" fill="#393939"/>
<rect x="26" y="525" width="1" height="17" fill="#474747"/><rect x="45" y="525" width="1" height="17" fill="#474747"/>
<circle cx="14.5" cy="532.5" r="3.6" fill="#8a8a8a" stroke="#c8c8c8" stroke-width="1.1"/><rect x="15.5" y="533.5" width="5" height="5" fill="#c8c8c8"/>
<circle cx="34.5" cy="532.5" r="3.6" fill="none" stroke="#c8c8c8" stroke-width="1.1"/><rect x="35.5" y="533.5" width="5" height="5" fill="#c8c8c8"/>
<circle cx="55" cy="533" r="3.5" fill="none" stroke="#6a6a6a" stroke-width="1.1"/><rect x="55" y="533" width="3" height="3" fill="#6a6a6a"/>
<!-- screen mode -->
<rect x="25.5" y="557.5" width="13" height="10" fill="#6a6a6a" stroke="#c8c8c8" stroke-width="1.1"/>
<rect x="33.5" y="551.5" width="13" height="10" fill="#6a6a6a" stroke="#c8c8c8" stroke-width="1.1"/>
<rect x="34" y="552" width="12" height="2" fill="#c8c8c8"/>
<g fill="#c8c8c8"><circle cx="31.5" cy="591.5" r="1.5"/><circle cx="36" cy="591.5" r="1.5"/><circle cx="40.5" cy="591.5" r="1.5"/></g>

<!-- layers panel -->
<rect x="858" y="89" width="233" height="235" fill="#383838"/>
<path d="M859,102V93Q859,90 862,90H1086Q1089,90 1089,93V102Z" fill="#444"/>
<path d="M1062,94L1059.5,96.5L1062,99M1066,94L1063.5,96.5L1066,99" stroke="#e0e0e0" stroke-width="1.3" fill="none"/>
<path d="M1078.5,94L1083.5,99.5M1083.5,94L1078.5,99.5" stroke="#d8d8d8" stroke-width="1.8"/>
<rect x="859" y="103" width="230" height="26" fill="#434343"/>
<rect x="859" y="103" width="47" height="26" fill="#535353"/>
<text x="868" y="120" font-size="11.5" fill="#e8e8e8" textLength="29" lengthAdjust="spacingAndGlyphs">Layers</text>
<g fill="#d0d0d0"><rect x="1073" y="113" width="10" height="1.2"/><rect x="1073" y="116" width="10" height="1.2"/><rect x="1073" y="119" width="10" height="1.2"/></g>
<rect x="859" y="129" width="230" height="187" fill="#535353"/>
<rect x="864.5" y="136.5" width="219" height="159" rx="3" fill="#535353" stroke="#5e5e5e"/>
<rect x="865" y="157.0" width="218" height="1" fill="#5d5d5d"/>
<path d="M868,146.2Q874.5,139.0 881,146.2Q874.5,153.39999999999998 868,146.2Z" fill="#c8c8c8"/>
<circle cx="874.5" cy="146.2" r="2.7" fill="#535353"/>
<circle cx="874.5" cy="146.2" r="1.2" fill="#c8c8c8"/>
<path d="M892.5,146.0V144.0A3,3 0 0 1 898.5,144.0V146.0" stroke="#c0c0c0" stroke-width="1.3" fill="none"/>
<rect x="891" y="145.5" width="9" height="6.5" fill="#c0c0c0"/>
<rect x="895" y="147.5" width="1.2" height="2.5" fill="#535353"/>
<rect x="908" y="138.0" width="3.3" height="18" fill="#4ff0f5"/>
<path d="M919.5,143.5L923,147.0L919.5,150.5" stroke="#e8e8e8" stroke-width="1.3" fill="none"/>
<rect x="937.5" y="138.5" width="17" height="17" fill="#fff" stroke="#111" stroke-width="1.5"/>
<path d="M940,147.5H952" stroke="#ff8a00" stroke-width="1" stroke-dasharray="2 1"/>
<text x="959.5" y="151.0" font-size="11" fill="#dcdcdc" textLength="54.5" lengthAdjust="spacingAndGlyphs">Sign Vectors</text>
<circle cx="1058" cy="147.0" r="3.8" fill="none" stroke="#d0d0d0" stroke-width="1.1"/>
<rect x="865" y="178.0" width="218" height="1" fill="#5d5d5d"/>
<path d="M868,167.2Q874.5,160.0 881,167.2Q874.5,174.39999999999998 868,167.2Z" fill="#c8c8c8"/>
<circle cx="874.5" cy="167.2" r="2.7" fill="#535353"/>
<circle cx="874.5" cy="167.2" r="1.2" fill="#c8c8c8"/>
<path d="M892.5,167.0V165.0A3,3 0 0 1 898.5,165.0V167.0" stroke="#c0c0c0" stroke-width="1.3" fill="none"/>
<rect x="891" y="166.5" width="9" height="6.5" fill="#c0c0c0"/>
<rect x="895" y="168.5" width="1.2" height="2.5" fill="#535353"/>
<rect x="908" y="159.0" width="3.3" height="18" fill="#f050f0"/>
<path d="M919.5,164.5L923,168.0L919.5,171.5" stroke="#e8e8e8" stroke-width="1.3" fill="none"/>
<rect x="937.5" y="159.5" width="17" height="17" fill="#fff" stroke="#111" stroke-width="1.5"/>
<path d="M942,163.0V173.0M942,164.0H950M942,168.0H950M942,172.0H950M950,163.0V174.0" stroke="#555" stroke-width="0.6" fill="none"/>
<text x="959.5" y="172.0" font-size="11" fill="#dcdcdc" textLength="54" lengthAdjust="spacingAndGlyphs">Safety Gui...</text>
<circle cx="1058" cy="168.0" r="3.8" fill="none" stroke="#d0d0d0" stroke-width="1.1"/>
<rect x="865" y="178.5" width="218" height="21" fill="#4e6079"/>
<path d="M1077,179.0H1083V185.0Z" fill="#c8c8c8"/>
<rect x="865" y="199.0" width="218" height="1" fill="#5d5d5d"/>
<path d="M868,188.2Q874.5,181.0 881,188.2Q874.5,195.39999999999998 868,188.2Z" fill="#c8c8c8"/>
<circle cx="874.5" cy="188.2" r="2.7" fill="#4e6079"/>
<circle cx="874.5" cy="188.2" r="1.2" fill="#c8c8c8"/>
<rect x="908" y="180.0" width="3.3" height="18" fill="#5050ff"/>
<path d="M919.5,185.5L923,189.0L919.5,192.5" stroke="#e8e8e8" stroke-width="1.3" fill="none"/>
<rect x="937.5" y="180.5" width="17" height="17" fill="#fff" stroke="#111" stroke-width="1.5"/>
<g font-size="4.6" font-weight="bold" fill="#000"><text x="941.5" y="186.0">DO</text><text x="940.5" y="191.0">NOT</text><text x="939.5" y="196.0">PASS</text></g>
<text x="959.5" y="193.0" font-size="11" fill="#dcdcdc" textLength="17" lengthAdjust="spacingAndGlyphs">text</text>
<circle cx="1058" cy="189.0" r="3.8" fill="none" stroke="#d0d0d0" stroke-width="1.1"/>
<rect x="1068.5" y="185.2" width="7.5" height="7.5" fill="#5050ff" stroke="#111" stroke-width="1"/>
<rect x="865" y="220.0" width="218" height="1" fill="#5d5d5d"/>
<path d="M868,209.2Q874.5,202.0 881,209.2Q874.5,216.39999999999998 868,209.2Z" fill="#c8c8c8"/>
<circle cx="874.5" cy="209.2" r="2.7" fill="#535353"/>
<circle cx="874.5" cy="209.2" r="1.2" fill="#c8c8c8"/>
<rect x="908" y="201.0" width="3.3" height="18" fill="#50f050"/>
<path d="M919.5,206.5L923,210.0L919.5,213.5" stroke="#e8e8e8" stroke-width="1.3" fill="none"/>
<rect x="937.5" y="201.5" width="17" height="17" fill="#fff" stroke="#111" stroke-width="1.5"/>
<text x="959.5" y="214.0" font-size="11" fill="#dcdcdc" textLength="32" lengthAdjust="spacingAndGlyphs">Layer 3</text>
<circle cx="1058" cy="210.0" r="3.8" fill="none" stroke="#d0d0d0" stroke-width="1.1"/>
<rect x="1068.5" y="206.2" width="7.5" height="7.5" fill="#50f050" stroke="#111" stroke-width="1"/>
<rect x="865" y="241.0" width="218" height="1" fill="#5d5d5d"/>
<path d="M868,230.2Q874.5,223.0 881,230.2Q874.5,237.39999999999998 868,230.2Z" fill="#c8c8c8"/>
<circle cx="874.5" cy="230.2" r="2.7" fill="#535353"/>
<circle cx="874.5" cy="230.2" r="1.2" fill="#c8c8c8"/>
<rect x="908" y="222.0" width="3.3" height="18" fill="#f05050"/>
<path d="M919.5,227.5L923,231.0L919.5,234.5" stroke="#e8e8e8" stroke-width="1.3" fill="none"/>
<rect x="937.5" y="222.5" width="17" height="17" fill="#fff" stroke="#111" stroke-width="1.5"/>
<rect x="941.5" y="225.0" width="9" height="12" rx="1" fill="none" stroke="#444" stroke-width="0.9"/>
<text x="959.5" y="235.0" font-size="11" fill="#dcdcdc" textLength="55" lengthAdjust="spacingAndGlyphs">Border Thi...</text>
<circle cx="1058" cy="231.0" r="3.8" fill="none" stroke="#d0d0d0" stroke-width="1.1"/>
<rect x="1068.5" y="227.2" width="7.5" height="7.5" fill="#f05050" stroke="#111" stroke-width="1"/>
<rect x="865" y="262.0" width="218" height="1" fill="#5d5d5d"/>
<path d="M868,251.2Q874.5,244.0 881,251.2Q874.5,258.4 868,251.2Z" fill="#c8c8c8"/>
<circle cx="874.5" cy="251.2" r="2.7" fill="#535353"/>
<circle cx="874.5" cy="251.2" r="1.2" fill="#c8c8c8"/>
<rect x="908" y="243.0" width="3.3" height="18" fill="#5080ff"/>
<path d="M919.5,248.5L923,252.0L919.5,255.5" stroke="#e8e8e8" stroke-width="1.3" fill="none"/>
<rect x="937.5" y="243.5" width="17" height="17" fill="#fff" stroke="#111" stroke-width="1.5"/>
<rect x="941.5" y="246.0" width="9" height="12" rx="1" fill="none" stroke="#444" stroke-width="0.9"/>
<text x="959.5" y="256.0" font-size="11" fill="#dcdcdc" textLength="55" lengthAdjust="spacingAndGlyphs">Inset Border</text>
<circle cx="1058" cy="252.0" r="3.8" fill="none" stroke="#d0d0d0" stroke-width="1.1"/>
<rect x="1068.5" y="248.2" width="7.5" height="7.5" fill="#5080ff" stroke="#111" stroke-width="1"/>
<rect x="885" y="137" width="1" height="126" fill="#5d5d5d"/>
<rect x="906" y="137" width="1" height="126" fill="#5d5d5d"/>
<rect x="912.5" y="137" width="1" height="126" fill="#5d5d5d"/>
<rect x="1047" y="137" width="1" height="126" fill="#5d5d5d"/>
<text x="864" y="309" font-size="11" fill="#b8bec4" textLength="37" lengthAdjust="spacingAndGlyphs">6 Layers</text>
<g stroke="#c8c8c8" stroke-width="1.2" fill="none">
<path d="M927,300H921.5V310.5H932V305M926,305.5L932.5,299M928.5,299H932.5V303"/>
<circle cx="950.5" cy="303" r="4"/><path d="M953.5,306L957.5,310"/>
<rect x="975.5" y="302.5" width="7" height="7" stroke="#8a8a8a"/>
<path d="M1001,300V304.5H1005M1003,302.5L1005,304.5L1003,306.5"/><rect x="1005.5" y="300.5" width="6" height="9"/><path d="M1008.5,302.5V307.5M1006,305H1011"/>
<rect x="1025.5" y="299.5" width="11" height="11"/><path d="M1031,302V308M1028,305H1034"/>
<path d="M1050,301.5H1062M1053.5,301.5V299.5H1058.5V301.5M1051.5,301.5V311H1060.5V301.5M1054.5,304V309M1056,304V309M1057.5,304V309"/>
</g>
<rect x="972.5" y="300.5" width="6.5" height="6.5" fill="#c8c8c8"/>
<rect x="859" y="316" width="230" height="7" fill="#474747"/>
<g fill="#2a2a2a"><rect x="964" y="318" width="1" height="4"/><rect x="966" y="318" width="1" height="4"/><rect x="968" y="318" width="1" height="4"/><rect x="970" y="318" width="1" height="4"/><rect x="972" y="318" width="1" height="4"/><rect x="974" y="318" width="1" height="4"/><rect x="976" y="318" width="1" height="4"/><rect x="978" y="318" width="1" height="4"/><rect x="980" y="318" width="1" height="4"/><rect x="982" y="318" width="1" height="4"/></g>
<!-- properties panel -->
<rect x="1090" y="89" width="252" height="619" fill="#383838"/>
<path d="M1091,102V93Q1091,90 1094,90H1338Q1341,90 1341,93V102Z" fill="#444"/>
<path d="M1315,94L1312.5,96.5L1315,99M1319,94L1316.5,96.5L1319,99" stroke="#e0e0e0" stroke-width="1.3" fill="none"/>
<path d="M1331,94L1336,99.5M1336,94L1331,99.5" stroke="#d8d8d8" stroke-width="1.8"/>
<rect x="1091" y="103" width="250" height="26" fill="#434343"/>
<rect x="1141.5" y="103" width="1" height="26.5" fill="#3a3a3a"/><rect x="1191.5" y="103" width="1" height="26.5" fill="#3a3a3a"/>
<rect x="1235" y="103" width="65" height="27" fill="#535353"/>
<text x="1100" y="119" font-size="11.5" fill="#aeaeae" textLength="40.5" lengthAdjust="spacingAndGlyphs" font-weight="bold">Image Tr</text>
<text x="1150" y="119" font-size="11.5" fill="#aeaeae" textLength="39" lengthAdjust="spacingAndGlyphs" font-weight="bold">Libraries</text>
<text x="1200" y="119" font-size="11.5" fill="#aeaeae" textLength="31" lengthAdjust="spacingAndGlyphs" font-weight="bold">Stroke</text>
<text x="1243" y="119" font-size="11.5" fill="#f4f4f4" textLength="47.5" lengthAdjust="spacingAndGlyphs" font-weight="bold">Properties</text>
<rect x="1091" y="129" width="239" height="570" fill="#535353"/>
<rect x="1330" y="129.5" width="11" height="570" fill="#474747"/>
<rect x="1330" y="684" width="11" height="15.5" fill="#3c3c3c"/>
<path d="M1330,143.5Q1330,139 1335,139Q1340,139 1340,143.5V660.5Q1340,665 1335,665Q1330,665 1330,660.5Z" fill="#5e5e5e"/>
<path d="M1331.5,136.5L1335,133.5L1338.5,136.5" stroke="#c0c0c0" stroke-width="1.2" fill="none"/>
<rect x="1091" y="162" width="239" height="2" fill="#474747"/>
<rect x="1091" y="287" width="239" height="2" fill="#474747"/>
<rect x="1091" y="459" width="239" height="2" fill="#474747"/>
<rect x="1091" y="544" width="239" height="2" fill="#474747"/>
<rect x="1091" y="618" width="239" height="2" fill="#474747"/>
<text x="1101" y="151.5" font-size="11" fill="#cdcdcd" textLength="62" lengthAdjust="spacingAndGlyphs" >Mixed Objects</text>
<text x="1101" y="185" font-size="11" fill="#cdcdcd" textLength="44" lengthAdjust="spacingAndGlyphs" >Transform</text>
<path d="M1104,209.5H1117M1104,225.5H1117M1102.5,211V224M1118.5,211V224" stroke="#d0d0d0" stroke-width="1"/><g fill="#535353" stroke="#d0d0d0" stroke-width="1"><rect x="1101.5" y="207.5" width="3.5" height="3.5"/><rect x="1101.5" y="215" width="3.5" height="3.5"/><rect x="1101.5" y="222.5" width="3.5" height="3.5"/><rect x="1109" y="207.5" width="3.5" height="3.5"/><rect x="1109" y="215" width="3.5" height="3.5"/><rect x="1109" y="222.5" width="3.5" height="3.5"/><rect x="1116.5" y="207.5" width="3.5" height="3.5"/><rect x="1116.5" y="215" width="3.5" height="3.5"/><rect x="1116.5" y="222.5" width="3.5" height="3.5"/></g><rect x="1108.5" y="214.5" width="4.5" height="4.5" fill="#f4f4f4"/>
<text x="1131" y="208" font-size="11" fill="#c0c0c0" textLength="8.5" lengthAdjust="spacingAndGlyphs" >X:</text>
<rect x="1145.5" y="194.5" width="55.5" height="20.0" rx="3" fill="#444" stroke="#4c4c4c"/><text x="1151" y="207.2" font-size="11" fill="#f0f0f0" textLength="15.5" lengthAdjust="spacingAndGlyphs" >6 in</text>
<text x="1131" y="234" font-size="11" fill="#c0c0c0" textLength="8.5" lengthAdjust="spacingAndGlyphs" >Y:</text>
<rect x="1145.5" y="220.5" width="55.5" height="20.0" rx="3" fill="#444" stroke="#4c4c4c"/><text x="1151" y="233.2" font-size="11" fill="#f0f0f0" textLength="15.5" lengthAdjust="spacingAndGlyphs" >9 in</text>
<text x="1217" y="208" font-size="11" fill="#c0c0c0" textLength="11" lengthAdjust="spacingAndGlyphs" >W:</text>
<rect x="1234.5" y="194.5" width="56.0" height="20.0" rx="3" fill="#444" stroke="#4c4c4c"/><text x="1240.5" y="207.2" font-size="11" fill="#f0f0f0" textLength="20" lengthAdjust="spacingAndGlyphs" >12 in</text>
<text x="1217" y="234" font-size="11" fill="#c0c0c0" textLength="9" lengthAdjust="spacingAndGlyphs" >H:</text>
<rect x="1234.5" y="220.5" width="56.0" height="20.0" rx="3" fill="#444" stroke="#4c4c4c"/><text x="1240.5" y="233.2" font-size="11" fill="#f0f0f0" textLength="20" lengthAdjust="spacingAndGlyphs" >18 in</text>
<path d="M1309.5,217.5V213A3,3 0 0 1 1315.5,213V217.5M1309.5,219V223A3,3 0 0 0 1315.5,223V219" stroke="#c8c8c8" stroke-width="1.6" fill="none"/>
<path d="M1305,210.5L1320,226" stroke="#c8c8c8" stroke-width="1.3"/>
<path d="M1127,261H1138M1127,261L1135,251M1133,257A5,5 0 0 1 1134.5,261" stroke="#c0c0c0" stroke-width="1" fill="none"/>
<text x="1140" y="260" font-size="11" fill="#c0c0c0">:</text>
<rect x="1143.5" y="246.5" width="56" height="20" rx="3" fill="#4b4b4b" stroke="#4c4c4c"/>
<rect x="1144" y="247" width="37" height="19" fill="#444"/>
<text x="1146.5" y="259.5" font-size="11" fill="#f0f0f0" textLength="11" lengthAdjust="spacingAndGlyphs" >0°</text>
<path d="M1187,254.5L1190.5,258L1194,254.5" stroke="#f0f0f0" stroke-width="1.3" fill="none"/>
<path d="M1242.5,251V263L1247.5,257Z" fill="none" stroke="#c8c8c8" stroke-width="1"/><path d="M1255.5,251V263L1250.5,257Z" fill="#c8c8c8"/><path d="M1249,250V264" stroke="#c8c8c8" stroke-width="1" stroke-dasharray="1 1"/>
<path d="M1267,250.5H1278L1272.5,256Z" fill="#c8c8c8"/><path d="M1267,263.5H1278L1272.5,258Z" fill="none" stroke="#c8c8c8" stroke-width="1"/><path d="M1266,257H1279" stroke="#c8c8c8" stroke-width="1" stroke-dasharray="1 1"/>
<g fill="#d0d0d0"><circle cx="1309.5" cy="278" r="1.5"/><circle cx="1315" cy="278" r="1.5"/><circle cx="1320.5" cy="278" r="1.5"/></g>
<text x="1101" y="310.5" font-size="11" fill="#cdcdcd" textLength="51.5" lengthAdjust="spacingAndGlyphs" >Appearance</text>
<rect x="1101.5" y="325.5" width="17" height="17" fill="#444" stroke="#2c2c2c"/>
<text x="1106" y="339.5" font-size="14" fill="#f0f0f0">?</text>
<text x="1131" y="339" font-size="11" fill="#d8d8d8" textLength="12" lengthAdjust="spacingAndGlyphs" >Fill</text>
<rect x="1101.5" y="354.5" width="17" height="17" fill="#444" stroke="#2c2c2c"/>
<rect x="1105.5" y="358.5" width="9" height="9" fill="#5a5a5a" stroke="#2c2c2c"/>
<g font-size="5.5" font-weight="bold" fill="#e0e0e0"><text x="1102.5" y="360">?</text><text x="1114.5" y="360">?</text><text x="1102.5" y="371">?</text><text x="1114.5" y="371">?</text></g>
<text x="1131" y="368" font-size="11" fill="#f0f0f0" textLength="28" lengthAdjust="spacingAndGlyphs" font-weight="bold">Stroke</text>
<path d="M1131,370.5H1159" stroke="#d0d0d0" stroke-dasharray="1 1"/>
<rect x="1180.5" y="353.5" width="68.5" height="20" rx="3" fill="#4b4b4b" stroke="#4c4c4c"/>
<rect x="1199" y="354" width="32" height="19" fill="#444"/>
<rect x="1198.5" y="354" width="1" height="19" fill="#3e3e3e"/><rect x="1231" y="354" width="1" height="19" fill="#3e3e3e"/>
<path d="M1186,358.5L1189,355.8L1192,358.5M1186,368L1189,370.7L1192,368" stroke="#e6e6e6" stroke-width="1.3" fill="none"/>
<path d="M1236.5,361.5L1240,365L1243.5,361.5" stroke="#f0f0f0" stroke-width="1.3" fill="none"/>
<rect x="1101.5" y="383.5" width="16.5" height="16.5" fill="#5c5c5c" stroke="#c0c0c0" stroke-width="1"/>
<g fill="#4a4a4a"><rect x="1102" y="384" width="4" height="4"/><rect x="1110" y="384" width="4" height="4"/><rect x="1106" y="388" width="4" height="4"/><rect x="1114" y="388" width="3.5" height="4"/><rect x="1102" y="392" width="4" height="4"/><rect x="1110" y="392" width="4" height="4"/><rect x="1106" y="396" width="4" height="3.5"/><rect x="1114" y="396" width="3.5" height="3.5"/></g>
<text x="1131" y="397" font-size="11" fill="#f0f0f0" textLength="33" lengthAdjust="spacingAndGlyphs" font-weight="bold">Opacity</text>
<path d="M1131,399.5H1164" stroke="#d0d0d0" stroke-dasharray="1 1"/>
<rect x="1180.5" y="381.5" width="68.5" height="20.5" rx="3" fill="#4b4b4b" stroke="#4c4c4c"/>
<rect x="1181" y="382" width="50" height="19.5" fill="#444"/>
<text x="1184.5" y="395.5" font-size="11" fill="#f0f0f0" textLength="24" lengthAdjust="spacingAndGlyphs" >100%</text>
<path d="M1238.5,388.5L1242,392L1238.5,395.5" stroke="#f0f0f0" stroke-width="1.4" fill="none"/>
<text x="1107" y="431" font-size="15" font-style="italic" fill="#c4c4c4" font-family="Liberation Serif" textLength="13" lengthAdjust="spacingAndGlyphs">fx</text><path d="M1120.5,431.5L1122,433L1123.5,431.5Z" fill="#c4c4c4"/>
<g fill="#d0d0d0"><circle cx="1309.5" cy="450" r="1.5"/><circle cx="1315" cy="450" r="1.5"/><circle cx="1320.5" cy="450" r="1.5"/></g>
<text x="1101" y="482" font-size="11" fill="#cdcdcd" textLength="21.5" lengthAdjust="spacingAndGlyphs" >Align</text>
<path d="M1107,503.5H1118M1107,515.5H1118M1106.5,504V515M1118.5,504V515" stroke="#bdbdbd" stroke-width="0.8"/><g fill="#d8d8d8"><rect x="1105.5" y="502.5" width="2" height="2"/><rect x="1111.5" y="502.5" width="2" height="2"/><rect x="1117.5" y="502.5" width="2" height="2"/><rect x="1105.5" y="508.5" width="2" height="2"/><rect x="1117.5" y="508.5" width="2" height="2"/><rect x="1105.5" y="514.5" width="2" height="2"/><rect x="1111.5" y="514.5" width="2" height="2"/><rect x="1117.5" y="514.5" width="2" height="2"/><rect x="1111.5" y="508.5" width="2" height="2"/></g>
<path d="M1121,508L1124,511L1127,508" stroke="#c8c8c8" stroke-width="1.1" fill="none"/>
<g fill="#c8c8c8"><rect x="1142" y="500" width="1.2" height="18"/><rect x="1144.5" y="502" width="7.5" height="5.8"/><rect x="1144.5" y="510" width="12.5" height="5"/><rect x="1179" y="500" width="1.2" height="18"/><rect x="1175" y="502" width="9" height="5.8"/><rect x="1172.5" y="510" width="13.5" height="5"/><rect x="1217" y="500" width="1.2" height="18"/><rect x="1208.3" y="502" width="7.7" height="5.8"/><rect x="1203" y="510" width="13" height="5"/><rect x="1231" y="500.5" width="18" height="1.2"/><rect x="1234" y="502.8" width="5" height="12.5"/><rect x="1241" y="502.8" width="5.8" height="7.5"/><rect x="1261" y="508" width="18" height="1.2"/><rect x="1264" y="502" width="4.8" height="13"/><rect x="1271" y="504" width="6" height="8.7"/><rect x="1291" y="516" width="18" height="1.2"/><rect x="1294" y="502" width="5" height="13"/><rect x="1301" y="507" width="5.5" height="8"/></g>
<g fill="#d0d0d0"><circle cx="1309.5" cy="535" r="1.5"/><circle cx="1315" cy="535" r="1.5"/><circle cx="1320.5" cy="535" r="1.5"/></g>
<text x="1101" y="566.5" font-size="11" fill="#cdcdcd" textLength="45" lengthAdjust="spacingAndGlyphs" >Pathfinder</text>
<g fill="#c8c8c8"><rect x="1106.5" y="585.5" width="9.5" height="9.5"/><rect x="1111.5" y="590.5" width="9.5" height="9.5"/></g>
<rect x="1138" y="586" width="9" height="9" fill="#c8c8c8"/><rect x="1142.5" y="590.5" width="9.5" height="9.5" fill="#535353" stroke="#c8c8c8" stroke-width="1.2"/>
<rect x="1169" y="586" width="9.5" height="9.5" fill="none" stroke="#c8c8c8" stroke-width="1.2"/><rect x="1173.5" y="590.5" width="9.5" height="9.5" fill="none" stroke="#c8c8c8" stroke-width="1.2"/><rect x="1173.5" y="590.5" width="5" height="5" fill="#c8c8c8"/>
<rect x="1200" y="585.5" width="9.5" height="9.5" fill="#c8c8c8"/><rect x="1205" y="590.5" width="9.5" height="9.5" fill="#c8c8c8"/><rect x="1205" y="590.5" width="4.5" height="4.5" fill="#535353"/>
<rect x="1263" y="575.5" width="63" height="21" rx="3" fill="#575757"/>
<text x="1278.5" y="590" font-size="11" fill="#7c7c7c" textLength="32" lengthAdjust="spacingAndGlyphs" >Expand</text>
<g fill="#d0d0d0"><circle cx="1309.5" cy="608" r="1.5"/><circle cx="1315" cy="608" r="1.5"/><circle cx="1320.5" cy="608" r="1.5"/></g>
<text x="1101" y="647" font-size="11" fill="#cdcdcd" textLength="59.5" lengthAdjust="spacingAndGlyphs" >Quick Actions</text>
<rect x="1101.5" y="661.5" width="107.5" height="19" rx="3" fill="none" stroke="#6a6a6a"/>
<rect x="1219.5" y="661.5" width="108" height="19" rx="3" fill="none" stroke="#6a6a6a"/>
<text x="1142" y="675" font-size="11" fill="#f4f4f4" textLength="27" lengthAdjust="spacingAndGlyphs" font-weight="bold">Group</text>
<text x="1257" y="675" font-size="11" fill="#f4f4f4" textLength="33" lengthAdjust="spacingAndGlyphs" font-weight="bold">Recolor</text>
<path d="M1101.5,699V695Q1101.5,692 1104.5,692H1324Q1327,692 1327,695V699" fill="none" stroke="#6a6a6a"/>
<rect x="1091" y="699" width="250" height="1" fill="#2e2e2e"/>
<rect x="1091" y="700" width="250" height="7.5" fill="#474747"/>
<g fill="#2a2a2a"><rect x="1206" y="702" width="1" height="4"/><rect x="1208" y="702" width="1" height="4"/><rect x="1210" y="702" width="1" height="4"/><rect x="1212" y="702" width="1" height="4"/><rect x="1214" y="702" width="1" height="4"/><rect x="1216" y="702" width="1" height="4"/><rect x="1218" y="702" width="1" height="4"/><rect x="1220" y="702" width="1" height="4"/><rect x="1222" y="702" width="1" height="4"/><rect x="1224" y="702" width="1" height="4"/></g>
<!-- right strip -->
<rect x="1341" y="93" width="8" height="17" fill="#383838"/>
<rect x="1341" y="110" width="1" height="601" fill="#3a3a3a"/>
<rect x="1342" y="110" width="7" height="601" fill="#5c5c5c"/>
<rect x="1349" y="93" width="17" height="618" fill="#4b4b4b"/>
<path d="M1353.5,105L1357.5,101L1361.5,105" stroke="#c0c0c0" stroke-width="1.2" fill="none"/>
<path d="M1353.5,701L1357.5,705L1361.5,701" stroke="#c0c0c0" stroke-width="1.2" fill="none"/>
<rect x="1350" y="390" width="15" height="25" rx="7.5" fill="#5f5f5f"/>
<!-- status bar -->
<rect x="73" y="711" width="1293" height="17" fill="#4b4b4b"/>
<rect x="73" y="711" width="5" height="17" fill="#454545"/>
<path d="M78.5,727V714Q78.5,711.5 81,711.5H128V727Z" fill="#3f3f3f"/>
<text x="81" y="724.5" font-size="11" fill="#f0f0f0" textLength="32.5" lengthAdjust="spacingAndGlyphs">30.22%</text>
<rect x="128" y="711.5" width="18.5" height="16" fill="#474747"/>
<path d="M133.5,720L137,723.5L140.5,720" stroke="#f0f0f0" stroke-width="1.3" fill="none"/>
<rect x="147" y="711.5" width="41" height="16" fill="#4d4d4d"/>
<path d="M155.5,715.5V723.5M162,715.5L157,719.5L162,723.5Z M177,715.5L172,719.5L177,723.5Z" fill="#6e6e6e" stroke="#6e6e6e" stroke-width="1"/>
<rect x="188" y="711.5" width="40" height="16" fill="#3f3f3f"/>
<text x="191" y="724.5" font-size="11" fill="#f0f0f0">1</text>
<rect x="228" y="711.5" width="18" height="16" fill="#474747"/>
<path d="M233.5,720L237,723.5L240.5,720" stroke="#f0f0f0" stroke-width="1.3" fill="none"/>
<rect x="246.5" y="711.5" width="40.5" height="16" fill="#4d4d4d"/>
<path d="M256.5,715.5L261.5,719.5L256.5,723.5Z M271,715.5L276,719.5L271,723.5Z M278.5,715.5V723.5" fill="#6e6e6e" stroke="#6e6e6e" stroke-width="1"/>
<rect x="289" y="711.5" width="204" height="16" fill="#4b4b4b"/>
<text x="368" y="724.5" font-size="11" fill="#cfcfcf" textLength="39.5" lengthAdjust="spacingAndGlyphs">Selection</text>
<path d="M495.5,715.5L500.5,719.5L495.5,723.5Z" fill="#e0e0e0"/>
<path d="M516,715.5L512.5,719.5L516,723.5" stroke="#bdbdbd" stroke-width="1.2" fill="none"/>
<rect x="924.5" y="712" width="25.5" height="14" rx="7" fill="#5f5f5f"/>
<path d="M1338.5,716L1342,719.5L1338.5,723" stroke="#d0d0d0" stroke-width="1.3" fill="none"/>
<rect x="1349" y="711" width="17" height="17" fill="#474747"/>

<!-- taskbar -->
<defs><linearGradient id="tb" x1="0" x2="1366" y1="0" y2="0" gradientUnits="userSpaceOnUse">
<stop offset="0" stop-color="#1c1c1c"/><stop offset="0.035" stop-color="#1d1d1c"/><stop offset="0.25" stop-color="#22221c"/>
<stop offset="0.45" stop-color="#2a2a21"/><stop offset="0.54" stop-color="#2b2a22"/><stop offset="0.56" stop-color="#26272a"/><stop offset="0.62" stop-color="#2a2b2e"/>
<stop offset="0.72" stop-color="#2b2c21"/><stop offset="0.76" stop-color="#20201c"/><stop offset="0.85" stop-color="#1b1b1b"/><stop offset="1" stop-color="#1a1a1a"/>
</linearGradient></defs>
<rect x="0" y="728" width="1366" height="40" fill="url(#tb)"/>
<g fill="#ffffff">
<path d="M16,741.7L22,740.8V747H16Z M23,740.6L32,739.5V747H23Z M16,748H22V754.4L16,753.6Z M23,748H32V755.8L23,754.6Z"/>
</g>
<rect x="48" y="728" width="288" height="40" fill="#f2f2f2"/>
<circle cx="70.5" cy="745.5" r="5.2" fill="none" stroke="#1a1a1a" stroke-width="1.4"/>
<path d="M66.6,749.5L60.5,755.8" stroke="#1a1a1a" stroke-width="1.6"/>
<text x="88.5" y="754" font-size="15" fill="#1f1f1f" textLength="127" lengthAdjust="spacingAndGlyphs">Type here to search</text>
<!-- seattle illustration -->
<defs>
<linearGradient id="sky" x1="0" y1="0" x2="0" y2="1"><stop offset="0" stop-color="#a88fd2"/><stop offset="0.45" stop-color="#eaa9a8"/><stop offset="0.8" stop-color="#f7cf98"/><stop offset="1" stop-color="#f8e0a0"/></linearGradient>
<linearGradient id="bush" x1="0" y1="0" x2="0" y2="1"><stop offset="0" stop-color="#9cc844"/><stop offset="1" stop-color="#2e8a4a"/></linearGradient>
</defs>
<path d="M262,761C258,759 258,753 261,751C259,746 262,741 268,741C269,736 274,733 279,734C282,730 290,729 295,732C299,728 309,728 313,732C318,731 324,734 325,739C330,740 333,745 331,750C333,753 333,758 330,761Z" fill="url(#sky)"/>
<circle cx="282" cy="752" r="4" fill="#fff3b8" opacity="0.8"/>
<path d="M295,752L309.5,740.5L318,746L328,752V760H295Z" fill="#9d92c6"/>
<path d="M305,744L309.5,740.5L313,743L310,745Z" fill="#f4eef6"/>
<g fill="#6f6fa8"><rect x="286" y="749" width="4" height="12"/><rect x="291" y="745" width="3.5" height="16"/><rect x="297" y="746" width="3" height="15"/><rect x="301" y="748" width="2.5" height="13"/><rect x="311" y="750" width="3" height="11"/><rect x="315" y="748" width="3" height="13"/><rect x="319" y="749" width="3" height="12"/></g>
<g fill="#8f8fb8"><rect x="281" y="753" width="5" height="8"/><rect x="303" y="751" width="4" height="10"/></g>
<rect x="290" y="755" width="4" height="6" fill="#5aa0c0"/>
<g fill="#4d5a8a"><rect x="263" y="756" width="3" height="5"/><rect x="266" y="752" width="3" height="9"/><rect x="269" y="754" width="3" height="7"/></g>
<path d="M276.6,728V737M270.5,738H282.8M272.5,739.5L275.5,743V757M280.8,739.5L277.8,743V757" stroke="#3f4a7c" stroke-width="1.3" fill="none"/>
<path d="M270.5,737.5Q276.6,734 282.8,737.5Z" fill="#e8dce8" stroke="#3f4a7c" stroke-width="0.8"/>
<rect x="274.8" y="743" width="3.6" height="14" fill="#3f4a7c"/>
<path d="M262,758H331V761H262Z" fill="#5e9a58" opacity="0.75"/>
<path d="M262,761H331L329,766H264Z" fill="#f3c0a8"/>
<path d="M294,765.5H328" stroke="#68c8e8" stroke-width="1.5"/>
<path d="M270,768C268,763 271,758 276,757C279,755 284,757 285,760C289,761 290,765 288,768Z" fill="url(#bush)"/>
<path d="M313,761C313,757 317,755 321,756C325,754 331,756 331.5,760C332,762 331,763 329,763H314Z" fill="url(#bush)"/>
<path d="M259,757C261,755 265,756 266,758V761H260Z" fill="#7aa860"/>
<!-- task view -->
<g fill="none" stroke="#ffffff" stroke-width="1.3">
<path d="M352,740.5H362M352,754.5H362M354.5,743.5H360.5V751.5H354.5Z"/>
<path d="M366.5,746.5V755.5"/>
</g>
<rect x="365" y="740" width="3" height="4.5" fill="#fff"/>
<!-- file explorer -->
<path d="M400,740.5H408L410,742.5H421.5V757H400Z" fill="#f6cf5a"/>
<rect x="400" y="738.6" width="8" height="2.5" fill="#e2a62b"/>
<rect x="400" y="744" width="21.5" height="13" fill="#fbd873"/>
<path d="M404.5,750.5H416.5V757H413V753.5H408V757H404.5Z" fill="#2f8fd8"/>
<!-- firefox -->
<defs>
<linearGradient id="ff" x1="0.8" y1="0.1" x2="0.3" y2="1"><stop offset="0" stop-color="#fff044"/><stop offset="0.4" stop-color="#ff9a2a"/><stop offset="0.75" stop-color="#ff3d4a"/><stop offset="1" stop-color="#e8208a"/></linearGradient>
<radialGradient id="ffp" cx="0.4" cy="0.4" r="0.7"><stop offset="0" stop-color="#9a5cff"/><stop offset="1" stop-color="#5a3ad0"/></radialGradient>
</defs>
<path d="M463,736C466,739 470,742 471,747C472,754 467,759.5 460,759.5C453,759.5 448.5,754 448.5,748C448.5,744 450,741 452,739.5L453,742L455.5,740.5L455.5,743C457,741 459.5,738.5 463,736Z" fill="url(#ff)"/>
<circle cx="459.8" cy="748" r="5.3" fill="url(#ffp)"/>
<path d="M451.5,745.5C453.5,744 457,744 459.5,745.5C457.5,746 456,748 456.5,750.5C454,749.5 452,747.5 451.5,745.5Z" fill="#ffa82e"/>
<path d="M461.5,743.5C464,743 466,745 465.5,747C465,749 463,748 462,746Z" fill="#ffcf3a" opacity="0.8"/>
<!-- mpc -->
<rect x="498" y="742.5" width="21.5" height="16" fill="#f8f8f8" stroke="#222" stroke-width="0.8"/>
<path d="M498,737.5L519,735V741.5H498Z" fill="#1a1a1a"/>
<path d="M502,737L505,741M508,736.3L511,740.5M514,735.6L517,740" stroke="#fff" stroke-width="1.6"/>
<text x="499.5" y="756.5" font-size="11" font-weight="bold" fill="#d45a2a">3</text>
<text x="506" y="756.5" font-size="11" font-weight="bold" fill="#3a8ad8">2</text>
<text x="512.5" y="756.5" font-size="11" font-weight="bold" fill="#3aa84a">1</text>
<!-- snipping -->
<ellipse cx="558" cy="746.5" rx="11.5" ry="7" fill="#e8e8e8" stroke="#d23a3a" stroke-width="1" transform="rotate(-25 558 746.5)"/>
<path d="M547,750C549,754 555,755 560,753L548,748Z" fill="#999"/>
<path d="M556,740L560,750M564,740L560,750" stroke="#888" stroke-width="0.8"/>
<circle cx="560" cy="754.5" r="2.6" fill="none" stroke="#2a8ee6" stroke-width="1.4"/>
<circle cx="567" cy="752.5" r="2.6" fill="none" stroke="#2a8ee6" stroke-width="1.4"/>
<path d="M560,751L562,746M566,750L562,746" stroke="#2a8ee6" stroke-width="1.2"/>
<!-- illustrator task -->
<rect x="594.5" y="737" width="21" height="20.5" rx="3" fill="#330000"/>
<text x="598" y="752.5" font-size="12.5" font-weight="bold" fill="#ff9a00" textLength="14" lengthAdjust="spacingAndGlyphs">Ai</text>
<text x="621" y="752" font-size="13.5" fill="#f2f2f2" textLength="111" lengthAdjust="spacingAndGlyphs">Untitled-4* @ 30.22...</text>
<rect x="587" y="766" width="152" height="2" fill="#b8b8b8"/>
<!-- chrome -->
<circle cx="768" cy="748" r="12" fill="#db4437"/>
<path d="M768,748L757.6,754L757.6,742Z" fill="#db4437"/>
<path d="M768,748L778.4,742A12,12 0 0 1 768,760Z" fill="#f4c20d"/>
<path d="M757.6,742A12,12 0 0 0 768,760L772,754Z" fill="#0f9d58"/>
<path d="M768,736A12,12 0 0 1 778.4,742H768Z" fill="#db4437"/>
<circle cx="768" cy="748" r="5.5" fill="#fff"/>
<circle cx="768" cy="748" r="4.3" fill="#4285f4"/>
<!-- vscode -->
<path d="M823.5,736.5L829.3,739.3V756.7L823.5,759.5L812,749.5L807.5,753L805,751.8V744.2L807.5,743L812,746.5Z M823.5,742.5L816,748L823.5,753.5Z M807.5,745.8V750.2L810,748Z" fill="#2b8ee3" fill-rule="evenodd"/>
<path d="M823.5,736.5L829.3,739.3V756.7L823.5,759.5Z" fill="#1f76c6"/>
<!-- weather -->
<circle cx="1043" cy="743.5" r="5" fill="#f5a623"/>
<path d="M1029,758C1025,758 1025,752 1029,751.5C1029,747 1035,745 1038,748C1041,745 1047,747 1047,751C1051,751 1051,758 1047,758Z" fill="#a9cdf2"/>
<path d="M1029,758H1047C1050,758 1050,754.5 1048,753.5" fill="none" stroke="#8db7e6" stroke-width="1"/>
<text x="1058" y="753" font-size="15" fill="#f2f2f2" textLength="29" lengthAdjust="spacingAndGlyphs">36°C</text>
<text x="1096.5" y="753" font-size="15" fill="#f2f2f2" textLength="85.5" lengthAdjust="spacingAndGlyphs">Mostly cloudy</text>
<path d="M1207.5,752L1213,746.5L1218.5,752" stroke="#f0f0f0" stroke-width="1.3" fill="none"/>
<path d="M1230,745.5H1233L1237,742V756L1233,752.5H1230Z" fill="none" stroke="#f0f0f0" stroke-width="1.1"/>
<path d="M1239.5,746A4,4 0 0 1 1239.5,752M1241.5,744A7,7 0 0 1 1241.5,754" fill="none" stroke="#f0f0f0" stroke-width="1"/>
<text x="1260" y="743" font-size="12" fill="#f2f2f2" textLength="42" lengthAdjust="spacingAndGlyphs">8:02 PM</text>
<text x="1257.5" y="761" font-size="12" fill="#f2f2f2" textLength="46.5" lengthAdjust="spacingAndGlyphs">4/8/2026</text>
<path d="M1324.5,740.5H1341.5V751.5H1331L1327.5,755V751.5H1324.5Z" fill="#f0f0f0"/>
<g stroke="#1b1b1b" stroke-width="1"><path d="M1327.5,743.5H1338.5M1327.5,746H1338.5M1327.5,748.5H1334"/></g>
<circle cx="1340" cy="755.5" r="6.5" fill="#1b1b1b" stroke="#cfcfcf" stroke-width="1.3"/>
<text x="1336.7" y="759.5" font-size="10" font-weight="bold" fill="#f0f0f0">2</text>
<rect x="1362" y="728" width="1" height="40" fill="#6a6a6a"/>

<g fill="#ffffff" fill-opacity="0.32">
<text x="1073.5" y="668.5" font-size="20" textLength="156" lengthAdjust="spacingAndGlyphs">Activate Windows</text>
<text x="1073.5" y="689.5" font-size="14.5" textLength="235" lengthAdjust="spacingAndGlyphs">Go to Settings to activate Windows.</text>
</g>

</svg>
</body></html>
